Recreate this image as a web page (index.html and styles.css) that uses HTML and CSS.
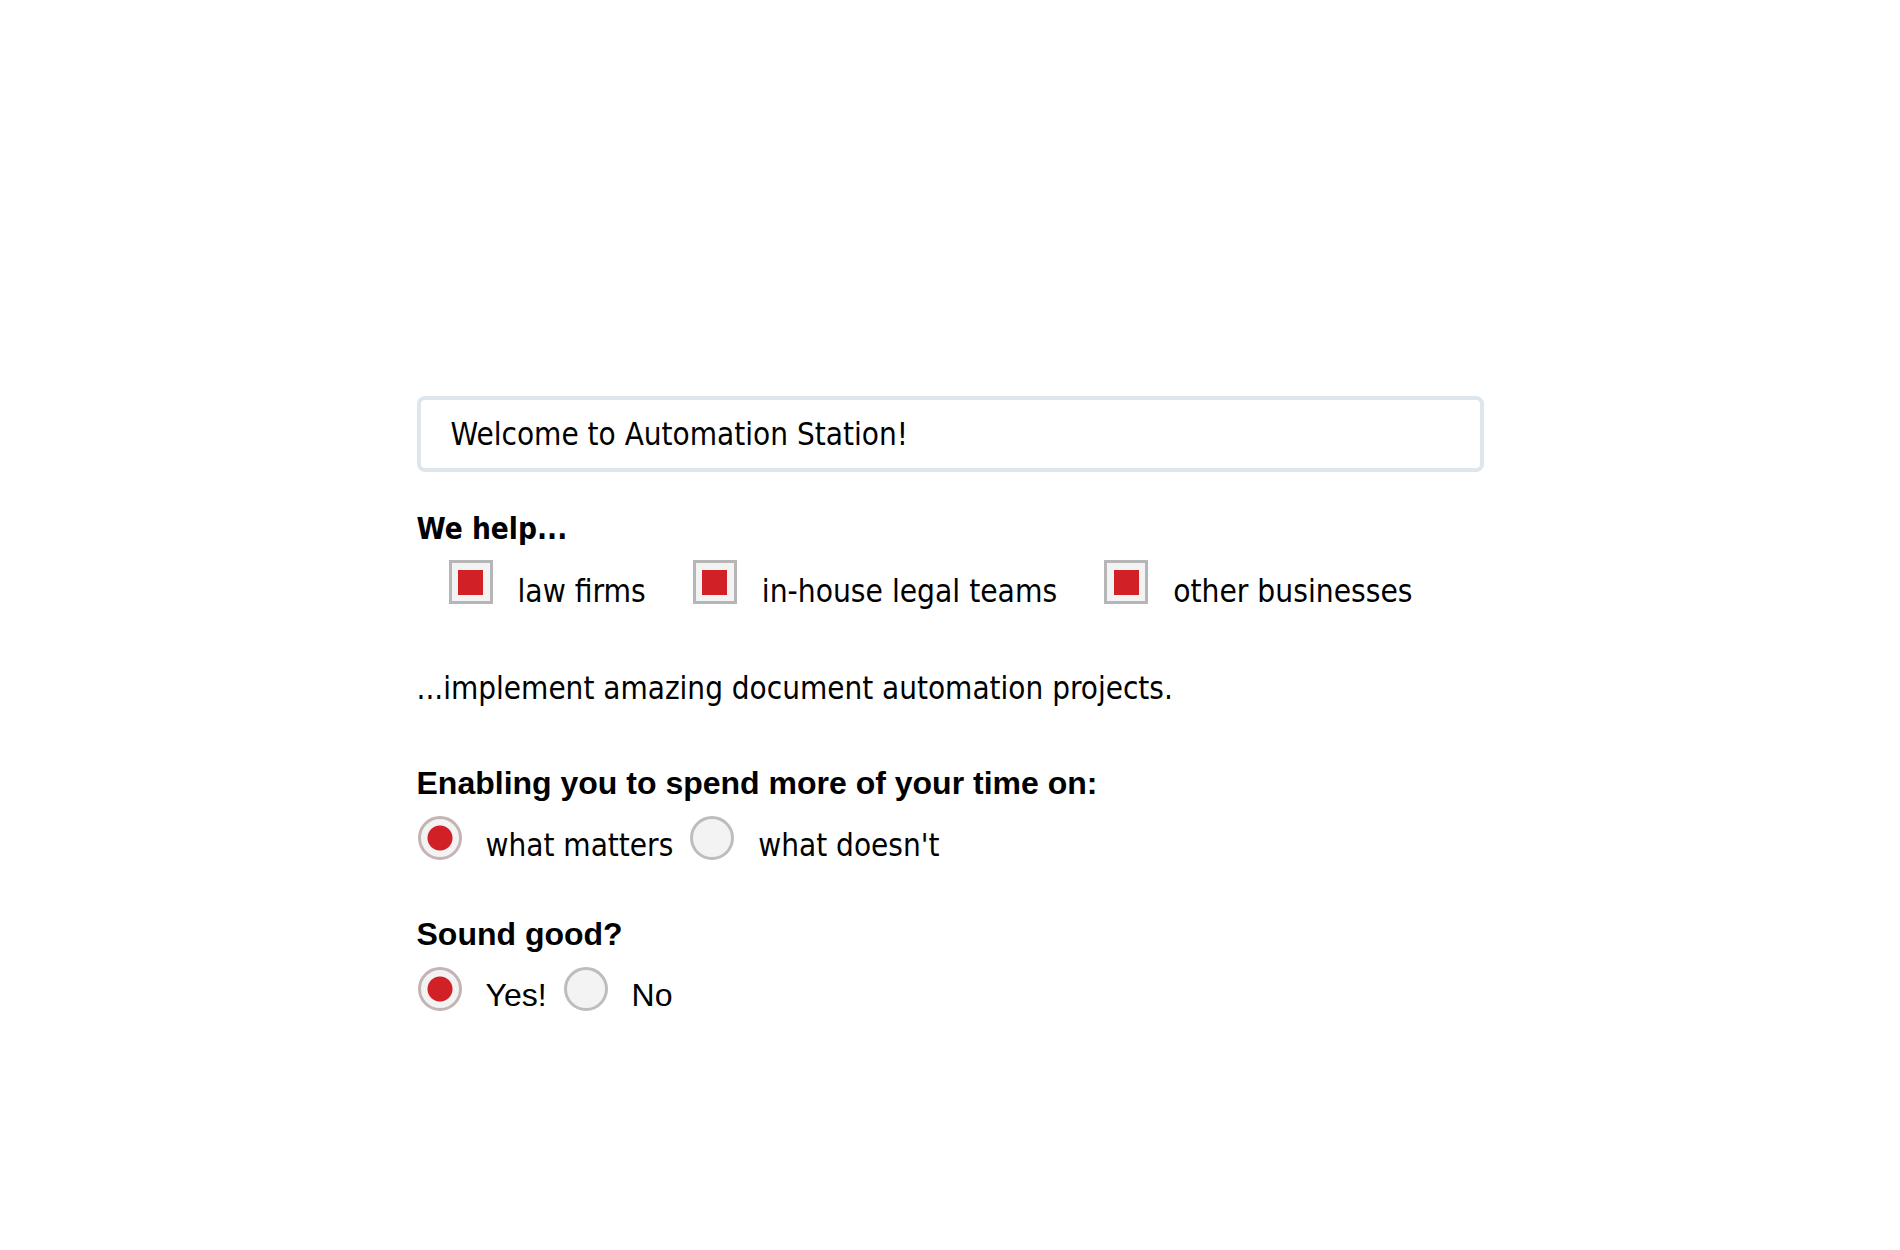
FILE: index.html
```html
<!DOCTYPE html>
<html lang="en">
<head>
<meta charset="utf-8">
<title>Automation Station</title>
<link rel="stylesheet" href="styles.css">
</head>
<body>
<main class="page">
  <div class="welcome">Welcome to Automation Station!</div>

  <h2 class="heading heading-tahoma">We help...</h2>
  <div class="check-row">
    <label class="opt"><input type="checkbox" class="box" checked><span class="opt-label">law firms</span></label>
    <label class="opt"><input type="checkbox" class="box" checked><span class="opt-label">in-house legal teams</span></label>
    <label class="opt"><input type="checkbox" class="box" checked><span class="opt-label">other businesses</span></label>
  </div>

  <p class="lead">...implement amazing document automation projects.</p>

  <h2 class="heading heading-arial">Enabling you to spend more of your time on:</h2>
  <div class="radio-row">
    <label class="ropt"><input type="radio" name="time" class="radio" checked><span class="opt-label">what matters</span></label>
    <label class="ropt"><input type="radio" name="time" class="radio"><span class="opt-label">what doesn't</span></label>
  </div>

  <h2 class="heading heading-arial heading-sound">Sound good?</h2>
  <div class="radio-row radio-row-arial">
    <label class="ropt"><input type="radio" name="good" class="radio" checked><span class="opt-label">Yes!</span></label>
    <label class="ropt"><input type="radio" name="good" class="radio"><span class="opt-label">No</span></label>
  </div>
</main>
</body>
</html>
```

FILE: styles.css
```css
html, body {
  margin: 0;
  padding: 0;
  background: #ffffff;
  color: #000000;
}

.page {
  width: 1067px;
  margin: 0 auto;
  padding-top: 396px;
  font-family: "DejaVu Sans Condensed", "DejaVu Sans", sans-serif;
  font-size: 31.4px;
  line-height: 40px;
}

.welcome {
  box-sizing: border-box;
  height: 76px;
  border: 4px solid #dde5ed;
  border-radius: 8px;
  padding: 0 30px;
  display: flex;
  align-items: center;
  font-size: 31.2px;
}

.heading {
  margin: 0;
  font-weight: bold;
}

.heading-tahoma {
  margin-top: 39px;
  font-size: 29.5px;
  line-height: 36px;
}

.heading-arial {
  font-family: "Liberation Sans", Arial, sans-serif;
  font-size: 32px;
  line-height: 40px;
  margin-top: 55px;
}

.heading-sound {
  margin-top: 49px;
}

.check-row {
  display: flex;
  align-items: flex-start;
  gap: 47px;
  padding-left: 32px;
  margin-top: 13px;
}

.opt,
.ropt {
  display: flex;
  align-items: flex-start;
  gap: 24px;
}

.opt {
  gap: 25px;
}

.opt-label {
  margin-top: 11px;
  white-space: nowrap;
}

.box {
  appearance: none;
  -webkit-appearance: none;
  box-sizing: border-box;
  width: 44px;
  height: 44px;
  margin: 0;
  border: 3px solid #b6b6b6;
  background: #f3f3f3 linear-gradient(#d22027, #d22027) no-repeat center / 25px 25px;
  flex: none;
}

.lead {
  margin: 57px 0 0;
  font-size: 31.15px;
}

.radio-row {
  display: flex;
  align-items: flex-start;
  gap: 17px;
  margin-top: 13px;
  padding-left: 1px;
  font-size: 31.2px;
}

.radio-row .opt-label {
  margin-top: 9px;
}

.radio-row-arial {
  font-family: "Liberation Sans", Arial, sans-serif;
  font-size: 32px;
}

.radio-row-arial .opt-label {
  margin-top: 8px;
}

.radio {
  appearance: none;
  -webkit-appearance: none;
  box-sizing: border-box;
  width: 44px;
  height: 44px;
  margin: 0;
  border: 3px solid #bdbdbd;
  border-radius: 50%;
  background: #f3f3f3;
  flex: none;
}

.radio:checked {
  border-color: #c4b4b4;
  background: radial-gradient(circle, #d22027 0, #d22027 12px, #f3f3f3 13px);
}
```
